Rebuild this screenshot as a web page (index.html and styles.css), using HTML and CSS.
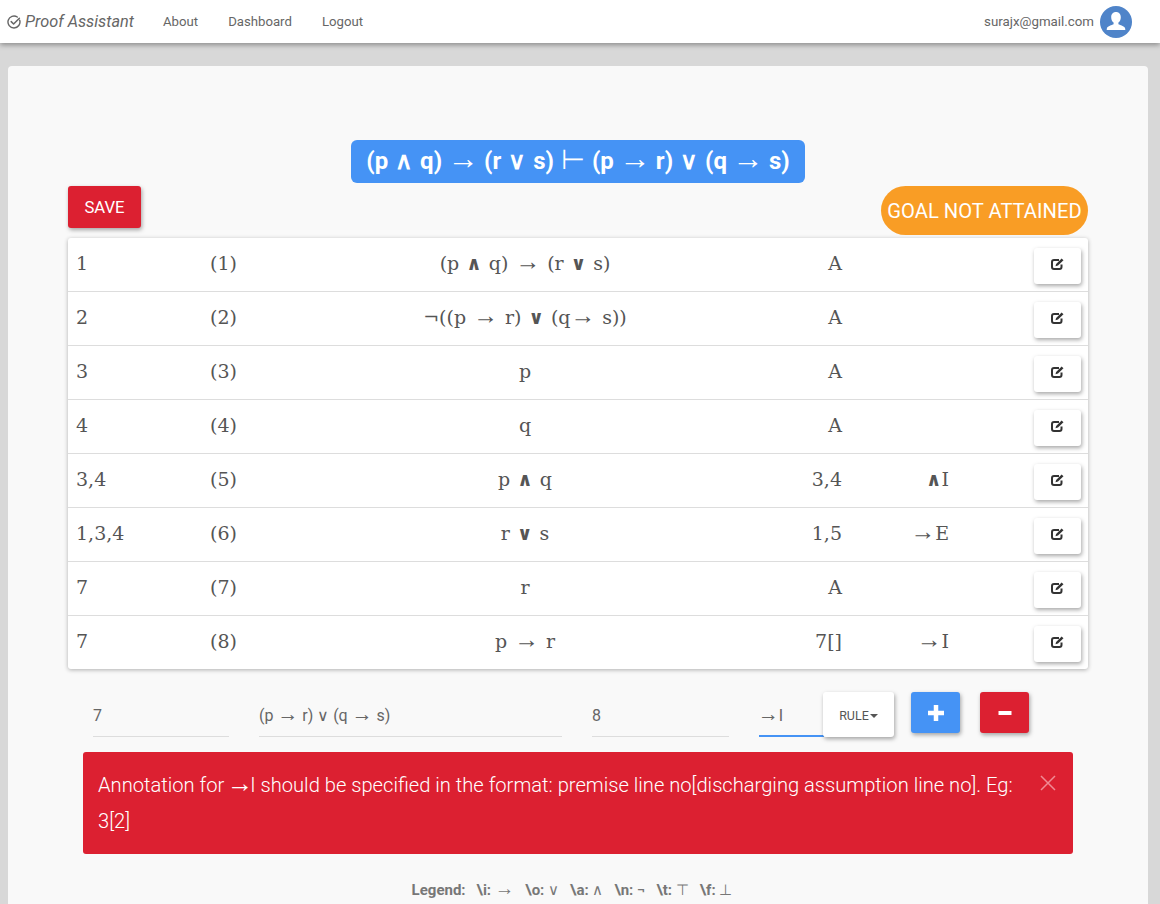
FILE: index.html
```html
<!DOCTYPE html>
<html lang="en">
<head>
    <meta charset="UTF-8">
    <title>Proof Assistant</title>
    <link rel="stylesheet" href="styles.css">
</head>
<body>
    <nav class="navbar">
        <a class="brand">
            <svg class="brand-icon" viewBox="0 0 14 14" width="14" height="14">
                <path d="M12.700 5.200A6 6 0 1 1 10.300 2" fill="none" stroke="#666" stroke-width="1.400" stroke-linecap="round"/>
                <path d="M4.200 6.600l2.400 2.400 5.800-5.800" fill="none" stroke="#666" stroke-width="1.500" stroke-linecap="round" stroke-linejoin="round"/>
            </svg>
            Proof Assistant
        </a>
        <a class="nav-link">About</a>
        <a class="nav-link">Dashboard</a>
        <a class="nav-link">Logout</a>
        <span class="user-email">surajx@gmail.com</span>
        <svg class="avatar" viewBox="0 0 32 32" width="32" height="32">
            <circle cx="16" cy="16" r="16" fill="#4f84c9"/>
            <path d="M16 6c-3 0-4.800 2.200-4.800 5.200 0 2.300 1 4.300 2.400 5.400v1.700c-1.800 1-5.800 1.700-6.600 3.800-.2.700-.3 1.300-.3 1.900h18.600c0-.6-.1-1.200-.3-1.900-.8-2.100-4.800-2.800-6.600-3.800v-1.700c1.400-1.100 2.400-3.100 2.400-5.400C20.800 8.200 19 6 16 6z" fill="#fff"/>
        </svg>
    </nav>

    <main class="page">
        <div class="card">
            <div class="title-row">
                <h1 class="sequent">(p &and; q) <span class="arrow">&rarr;</span> (r &or; s) <span class="thin">&#8866;</span> (p <span class="arrow">&rarr;</span> r) &or; (q <span class="arrow">&rarr;</span> s)</h1>
            </div>

            <div class="action-row">
                <button class="btn-save">SAVE</button>
                <div class="goal-pill">GOAL NOT ATTAINED</div>
            </div>

            <div class="proof">
                <div class="proof-row">
                    <span>1</span><span>(1)</span><span class="formula">(p <b>&and;</b> q) <span class="arrow">&rarr;</span> (r <b>&or;</b> s)</span><span class="right">A</span><span class="right"></span>
                    <button class="btn-edit"><svg viewBox="0 0 13 12" width="13" height="12"><use href="#edit-icon"/></svg></button>
                </div>
                <div class="proof-row">
                    <span>2</span><span>(2)</span><span class="formula">&not;((p <span class="arrow">&rarr;</span> r) <b>&or;</b> (q<span class="arrow">&rarr;</span> s))</span><span class="right">A</span><span class="right"></span>
                    <button class="btn-edit"><svg viewBox="0 0 13 12" width="13" height="12"><use href="#edit-icon"/></svg></button>
                </div>
                <div class="proof-row">
                    <span>3</span><span>(3)</span><span class="formula">p</span><span class="right">A</span><span class="right"></span>
                    <button class="btn-edit"><svg viewBox="0 0 13 12" width="13" height="12"><use href="#edit-icon"/></svg></button>
                </div>
                <div class="proof-row">
                    <span>4</span><span>(4)</span><span class="formula">q</span><span class="right">A</span><span class="right"></span>
                    <button class="btn-edit"><svg viewBox="0 0 13 12" width="13" height="12"><use href="#edit-icon"/></svg></button>
                </div>
                <div class="proof-row">
                    <span>3,4</span><span>(5)</span><span class="formula">p <b>&and;</b> q</span><span class="right">3,4</span><span class="right"><b>&and;</b>I</span>
                    <button class="btn-edit"><svg viewBox="0 0 13 12" width="13" height="12"><use href="#edit-icon"/></svg></button>
                </div>
                <div class="proof-row">
                    <span>1,3,4</span><span>(6)</span><span class="formula">r <b>&or;</b> s</span><span class="right">1,5</span><span class="right"><span class="arrow">&rarr;</span>E</span>
                    <button class="btn-edit"><svg viewBox="0 0 13 12" width="13" height="12"><use href="#edit-icon"/></svg></button>
                </div>
                <div class="proof-row">
                    <span>7</span><span>(7)</span><span class="formula">r</span><span class="right">A</span><span class="right"></span>
                    <button class="btn-edit"><svg viewBox="0 0 13 12" width="13" height="12"><use href="#edit-icon"/></svg></button>
                </div>
                <div class="proof-row">
                    <span>7</span><span>(8)</span><span class="formula">p <span class="arrow">&rarr;</span> r</span><span class="right">7[]</span><span class="right"><span class="arrow">&rarr;</span>I</span>
                    <button class="btn-edit"><svg viewBox="0 0 13 12" width="13" height="12"><use href="#edit-icon"/></svg></button>
                </div>
            </div>

            <form class="line-form">
                <div class="field field-deps">7</div>
                <div class="field field-formula">(p <span class="arrow">&rarr;</span> r) &or; (q <span class="arrow">&rarr;</span> s)</div>
                <div class="field field-annot">8</div>
                <div class="rule-group">
                    <div class="field field-rule"><span class="arrow">&rarr;</span>I</div>
                    <button type="button" class="btn-rule">RULE<span class="caret"></span></button>
                </div>
                <button type="button" class="btn-square btn-add">
                    <svg viewBox="0 0 16 16" width="16" height="16"><path d="M8 0v16M0 8h16" stroke="#fff" stroke-width="4.500"/></svg>
                </button>
                <button type="button" class="btn-square btn-remove">
                    <svg viewBox="0 0 14 14" width="14" height="14"><path d="M.5 7h13" stroke="#fff" stroke-width="4"/></svg>
                </button>
            </form>

            <div class="alert">
                <p>Annotation for <span class="arrow">&rarr;</span>I should be specified in the format: premise line no[discharging assumption line no]. Eg: 3[2]</p>
                <svg class="alert-close" viewBox="0 0 16 16" width="16" height="16"><path d="M1 1l14 14M15 1L1 15" stroke="#f08a94" stroke-width="1.500"/></svg>
            </div>

            <div class="legend">
                <span>Legend:</span><span>\i: <i class="arrow">&rarr;</i></span><span>\o: <i>&or;</i></span><span>\a: <i>&and;</i></span><span>\n: <i>&not;</i></span><span>\t: <i>&#8868;</i></span><span>\f: <i>&#8869;</i></span>
            </div>
        </div>
    </main>

    <!-- shared edit icon -->
    <svg class="icon-defs" width="0" height="0">
        <symbol id="edit-icon" viewBox="0 0 13 12">
            <path d="M8 2H3a2 2 0 0 0-2 2v5a2 2 0 0 0 2 2h5.500a2 2 0 0 0 2-2V6.500" fill="none" stroke="#333" stroke-width="2"/>
            <path d="M4.500 8.200l.6-2.300L10.600.4l1.900 1.800L7 7.600z" fill="#333"/>
        </symbol>
    </svg>
</body>
</html>
```

FILE: styles.css
```css
* {
    box-sizing: border-box;
}

body {
    margin: 0;
    height: 904px;
    overflow: hidden;
    display: flex;
    flex-direction: column;
    background-color: #d8d8d8;
    font-family: Roboto, "Liberation Serif", sans-serif;
    color: #666;
}

.navbar {
    flex-shrink: 0;
    height: 43px;
    display: flex;
    align-items: center;
    padding: 0 28px 0 7px;
    background-color: #fff;
    box-shadow: 0 2px 5px rgba(0, 0, 0, 0.35);
    font-size: 13.3px;
}

.brand {
    display: flex;
    align-items: center;
    gap: 4px;
    width: 156px;
    font-size: 16.3px;
    font-style: italic;
    white-space: nowrap;
}

.nav-link {
    margin-right: 30px;
    font-size: 13.2px;
}

.user-email {
    margin-left: auto;
    margin-right: 6px;
}

.page {
    flex: 1;
    min-height: 0;
    padding: 23px 12px 0 8px;
}

.card {
    height: 100%;
    padding: 74px 60px 0;
    background-color: #f9f9f9;
    border-radius: 4px 4px 0 0;
}

.title-row {
    display: flex;
    justify-content: center;
}

.sequent {
    margin: 0;
    height: 43px;
    padding: 0 15px;
    line-height: 43px;
    white-space: pre;
    word-spacing: 1px;
    background-color: #4593f5;
    border-radius: 6px;
    color: #fff;
    font-size: 24px;
    font-weight: 700;
}

.sequent .arrow {
    margin: 0 -0.05em;
}

.thin {
    font-weight: 400;
    font-size: 1.15em;
    line-height: 0;
    font-family: "DejaVu Sans", sans-serif;
}

/* the fallback arrow is short, the reference one runs a full em */
.arrow {
    font-family: "Liberation Serif", serif;
    font-size: 1.3em;
    font-style: normal;
    font-weight: 400;
    line-height: 0;
}

.action-row {
    display: flex;
    justify-content: space-between;
    align-items: flex-start;
    margin-top: 3px;
    height: 52px;
}

.btn-save {
    width: 73px;
    height: 42px;
    border: none;
    border-radius: 3px;
    background-color: #dc2031;
    color: #fff;
    font-family: Roboto, sans-serif;
    font-size: 16.7px;
    box-shadow: 1px 2px 4px rgba(0, 0, 0, 0.35);
}

.goal-pill {
    width: 207px;
    height: 49px;
    line-height: 50px;
    text-align: center;
    border-radius: 25px;
    background-color: #f99d25;
    color: #fff;
    font-size: 20.2px;
    white-space: nowrap;
}

.proof {
    background-color: #fff;
    border-radius: 3px;
    box-shadow: 0 1px 4px rgba(0, 0, 0, 0.3);
    font-family: "DejaVu Serif", serif;
    font-size: 19px;
    color: #555;
}

.proof-row {
    display: grid;
    grid-template-columns: 134px 90px 450px 92px 107px 1fr;
    align-items: center;
    height: 54px;
    padding: 0 7px 0 8px;
    border-bottom: 1px solid #ddd;
}

.proof-row > span {
    margin-bottom: 4px;
}

.proof-row:last-child {
    height: 53px;
    border-bottom: none;
}

.formula {
    text-align: center;
    word-spacing: 1px;
}

.right {
    text-align: right;
}

.btn-edit {
    justify-self: end;
    width: 47px;
    height: 36px;
    margin-top: 2px;
    padding: 0 0 3px;
    display: flex;
    align-items: center;
    justify-content: center;
    border: none;
    border-radius: 3px;
    background-color: #fff;
    box-shadow: 1px 2px 4px rgba(0, 0, 0, 0.35);
}

.line-form {
    display: flex;
    align-items: flex-start;
    margin-top: 23px;
    padding-left: 25px;
}

.field {
    height: 45px;
    line-height: 47px;
    white-space: pre;
    border-bottom: 1px solid #ddd;
    font-size: 16px;
    color: #666;
}

.field-deps {
    width: 136px;
    margin-right: 30px;
}

.field-formula {
    width: 303px;
    margin-right: 30px;
}

.field-annot {
    width: 137px;
    margin-right: 30px;
}

.rule-group {
    display: flex;
    margin-right: 17px;
}

.field-rule {
    width: 65px;
    border-bottom: 2px solid #4593f5;
}

.field-rule .arrow {
    margin-left: -1px;
}

.btn-rule {
    width: 71px;
    height: 45px;
    margin-left: -1px;
    padding: 2px 0 0;
    border: none;
    border-radius: 3px;
    background-color: #fff;
    box-shadow: 1px 2px 4px rgba(0, 0, 0, 0.35);
    font-family: Roboto, sans-serif;
    font-size: 12.5px;
    color: #555;
}

.caret {
    display: inline-block;
    margin-left: 1px;
    vertical-align: 2px;
    border-top: 4px solid #555;
    border-left: 4px solid transparent;
    border-right: 4px solid transparent;
}

.btn-square {
    width: 49px;
    height: 41px;
    margin-right: 20px;
    padding: 0;
    display: flex;
    align-items: center;
    justify-content: center;
    border: none;
    border-radius: 3px;
    box-shadow: 1px 2px 4px rgba(0, 0, 0, 0.35);
}

.btn-add {
    background-color: #4593f5;
}

.btn-remove {
    background-color: #dc2031;
}

.alert {
    display: flex;
    align-items: flex-start;
    justify-content: space-between;
    width: 990px;
    height: 102px;
    margin: 15px 0 0 15px;
    padding: 15px 17px 0 15px;
    background-color: #dc2031;
    border-radius: 3px;
    color: #fff;
    font-size: 20.15px;
    font-weight: 300;
    line-height: 36px;
}

.alert p {
    margin: 0;
    width: 935px;
}

.alert .arrow {
    margin: 0 -0.1em;
}

.alert-close {
    margin-top: 8px;
}

.legend {
    margin-top: 27px;
    padding-right: 12px;
    display: flex;
    justify-content: center;
    align-items: baseline;
    gap: 11px;
    font-size: 15px;
    font-weight: 700;
    color: #777;
    white-space: nowrap;
}

.legend i {
    font-style: normal;
    font-weight: 400;
}

.icon-defs {
    position: absolute;
}
```
